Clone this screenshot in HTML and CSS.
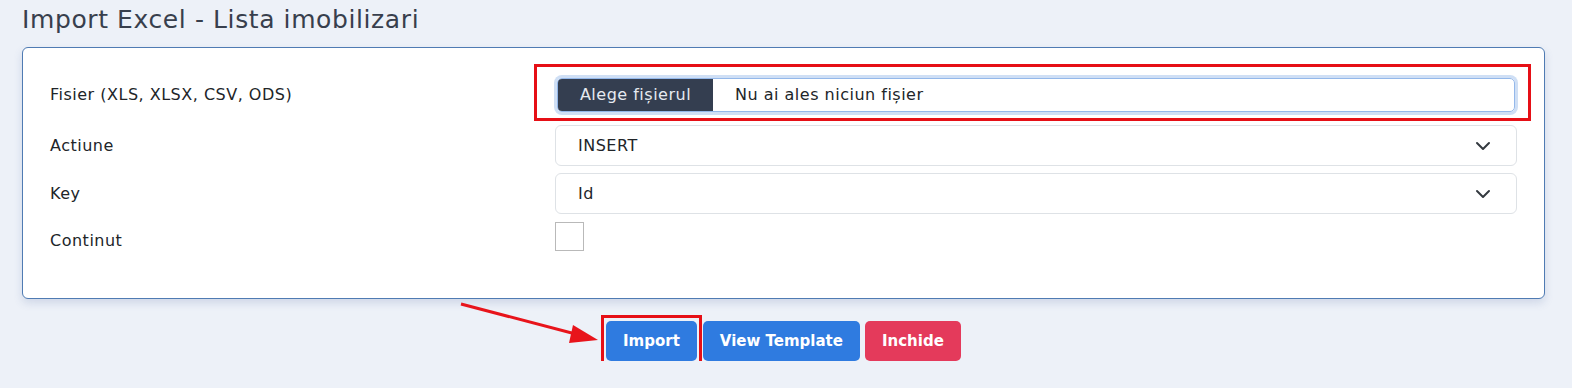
FILE: index.html
```html
<!DOCTYPE html>
<html lang="ro">
<head>
    <meta charset="UTF-8">
    <meta name="viewport" content="width=device-width, initial-scale=1.0">
    <title>Import Excel - Lista imobilizari</title>
    <link rel="stylesheet" href="styles.css">
</head>
<body>
    <h1 class="page-title">Import Excel - Lista imobilizari</h1>

    <form class="import-card" onsubmit="return false">
        <div class="form-row row-file">
            <label class="form-label">Fisier (XLS, XLSX, CSV, ODS)</label>
            <div class="form-field">
                <div class="file-box">
                    <span class="file-button">Alege fișierul</span>
                    <span class="file-name">Nu ai ales niciun fișier</span>
                </div>
                <div class="mark mark-file"></div>
            </div>
        </div>
        <div class="form-row row-select">
            <label class="form-label">Actiune</label>
            <div class="form-field">
                <div class="select-box">
                    <span>INSERT</span>
                    <svg class="chevron" width="16" height="16" viewBox="0 0 16 16"><path d="M2 5l6 6 6-6" fill="none" stroke="#343a40" stroke-width="2" stroke-linecap="round" stroke-linejoin="round"/></svg>
                </div>
            </div>
        </div>
        <div class="form-row row-select row-key">
            <label class="form-label">Key</label>
            <div class="form-field">
                <div class="select-box">
                    <span>Id</span>
                    <svg class="chevron" width="16" height="16" viewBox="0 0 16 16"><path d="M2 5l6 6 6-6" fill="none" stroke="#343a40" stroke-width="2" stroke-linecap="round" stroke-linejoin="round"/></svg>
                </div>
            </div>
        </div>
        <div class="form-row row-check">
            <label class="form-label">Continut</label>
            <div class="form-field">
                <span class="check-box"></span>
            </div>
        </div>
    </form>

    <div class="actions">
        <svg class="arrow" width="150" height="50" viewBox="0 0 150 50">
            <line x1="2" y1="2" x2="128" y2="35" stroke="#e8141b" stroke-width="3"/>
            <polygon points="139,38 114,23 110,41" fill="#e8141b"/>
        </svg>
        <div class="btn-wrap">
            <button class="btn btn-blue">Import</button>
        </div>
        <button class="btn btn-blue">View Template</button>
        <button class="btn btn-red">Inchide</button>
    </div>
</body>
</html>
```

FILE: styles.css
```css
body {
    margin: 0;
    padding: 0 27px 0 22px;
    background: #edf1f8;
    font-family: 'DejaVu Sans', sans-serif;
    font-size: 16px;
    letter-spacing: 0.5px;
    color: #212529;
}

.page-title {
    margin: 0;
    padding-top: 5px;
    height: 42px;
    font-size: 25px;
    font-weight: normal;
    letter-spacing: 0.6px;
    color: #383f4d;
}

.import-card {
    background: #fff;
    border: 1px solid #4f7bb3;
    border-radius: 6px;
    box-shadow: 0 4px 8px rgba(70, 100, 160, 0.18);
    padding: 26px 27px 38px 27px;
}

.form-row {
    display: flex;
    align-items: center;
}

.form-label {
    flex: 0 0 505px;
}

.form-field {
    flex: 1;
    position: relative;
}

.row-file {
    height: 41px;
    margin-bottom: 10px;
}

.row-select {
    height: 41px;
    margin-bottom: 7px;
}

.row-key {
    margin-bottom: 8px;
}

.row-check {
    height: 38px;
    align-items: flex-start;
}

.row-check .form-label {
    padding-top: 9px;
}

.file-box {
    margin: 0 2px;
    height: 32px;
    display: flex;
    border: 1px solid #94b8ea;
    border-radius: 5px;
    box-shadow: 0 0 0 3px #cfdff5;
    overflow: hidden;
}

.file-button {
    width: 155px;
    background: #343e50;
    color: #e6eaf0;
    display: flex;
    align-items: center;
    justify-content: center;
}

.file-name {
    padding-left: 22px;
    display: flex;
    align-items: center;
}

.select-box {
    height: 39px;
    border: 1px solid #dee2e6;
    border-radius: 6px;
    display: flex;
    align-items: center;
    justify-content: space-between;
    padding: 0 25px 0 22px;
}

.check-box {
    display: block;
    width: 27px;
    height: 27px;
    border: 1px solid #b9b9b9;
}

/* red annotation boxes */
.mark {
    position: absolute;
    border: 3px solid #e60f16;
    pointer-events: none;
}

.mark-file {
    left: -21px;
    right: -14px;
    top: -14px;
    bottom: -9px;
}

.actions {
    position: relative;
    display: flex;
    gap: 5px;
    margin-top: 22px;
    padding-left: 584px;
}

.arrow {
    position: absolute;
    left: 437px;
    top: -19px;
}

.btn-wrap {
    display: flex;
    border: 3px solid #e60f16;
    padding: 3px 2px;
    margin: -6px -4px -6px -5px;
}

.btn {
    height: 40px;
    border: none;
    border-radius: 5px;
    padding: 0 17px;
    font-family: inherit;
    font-size: 15px;
    font-weight: bold;
    letter-spacing: 0;
    color: #fff;
}

.btn-blue {
    background: #2f7be0;
}

.btn-red {
    background: #e43a5b;
}
```
